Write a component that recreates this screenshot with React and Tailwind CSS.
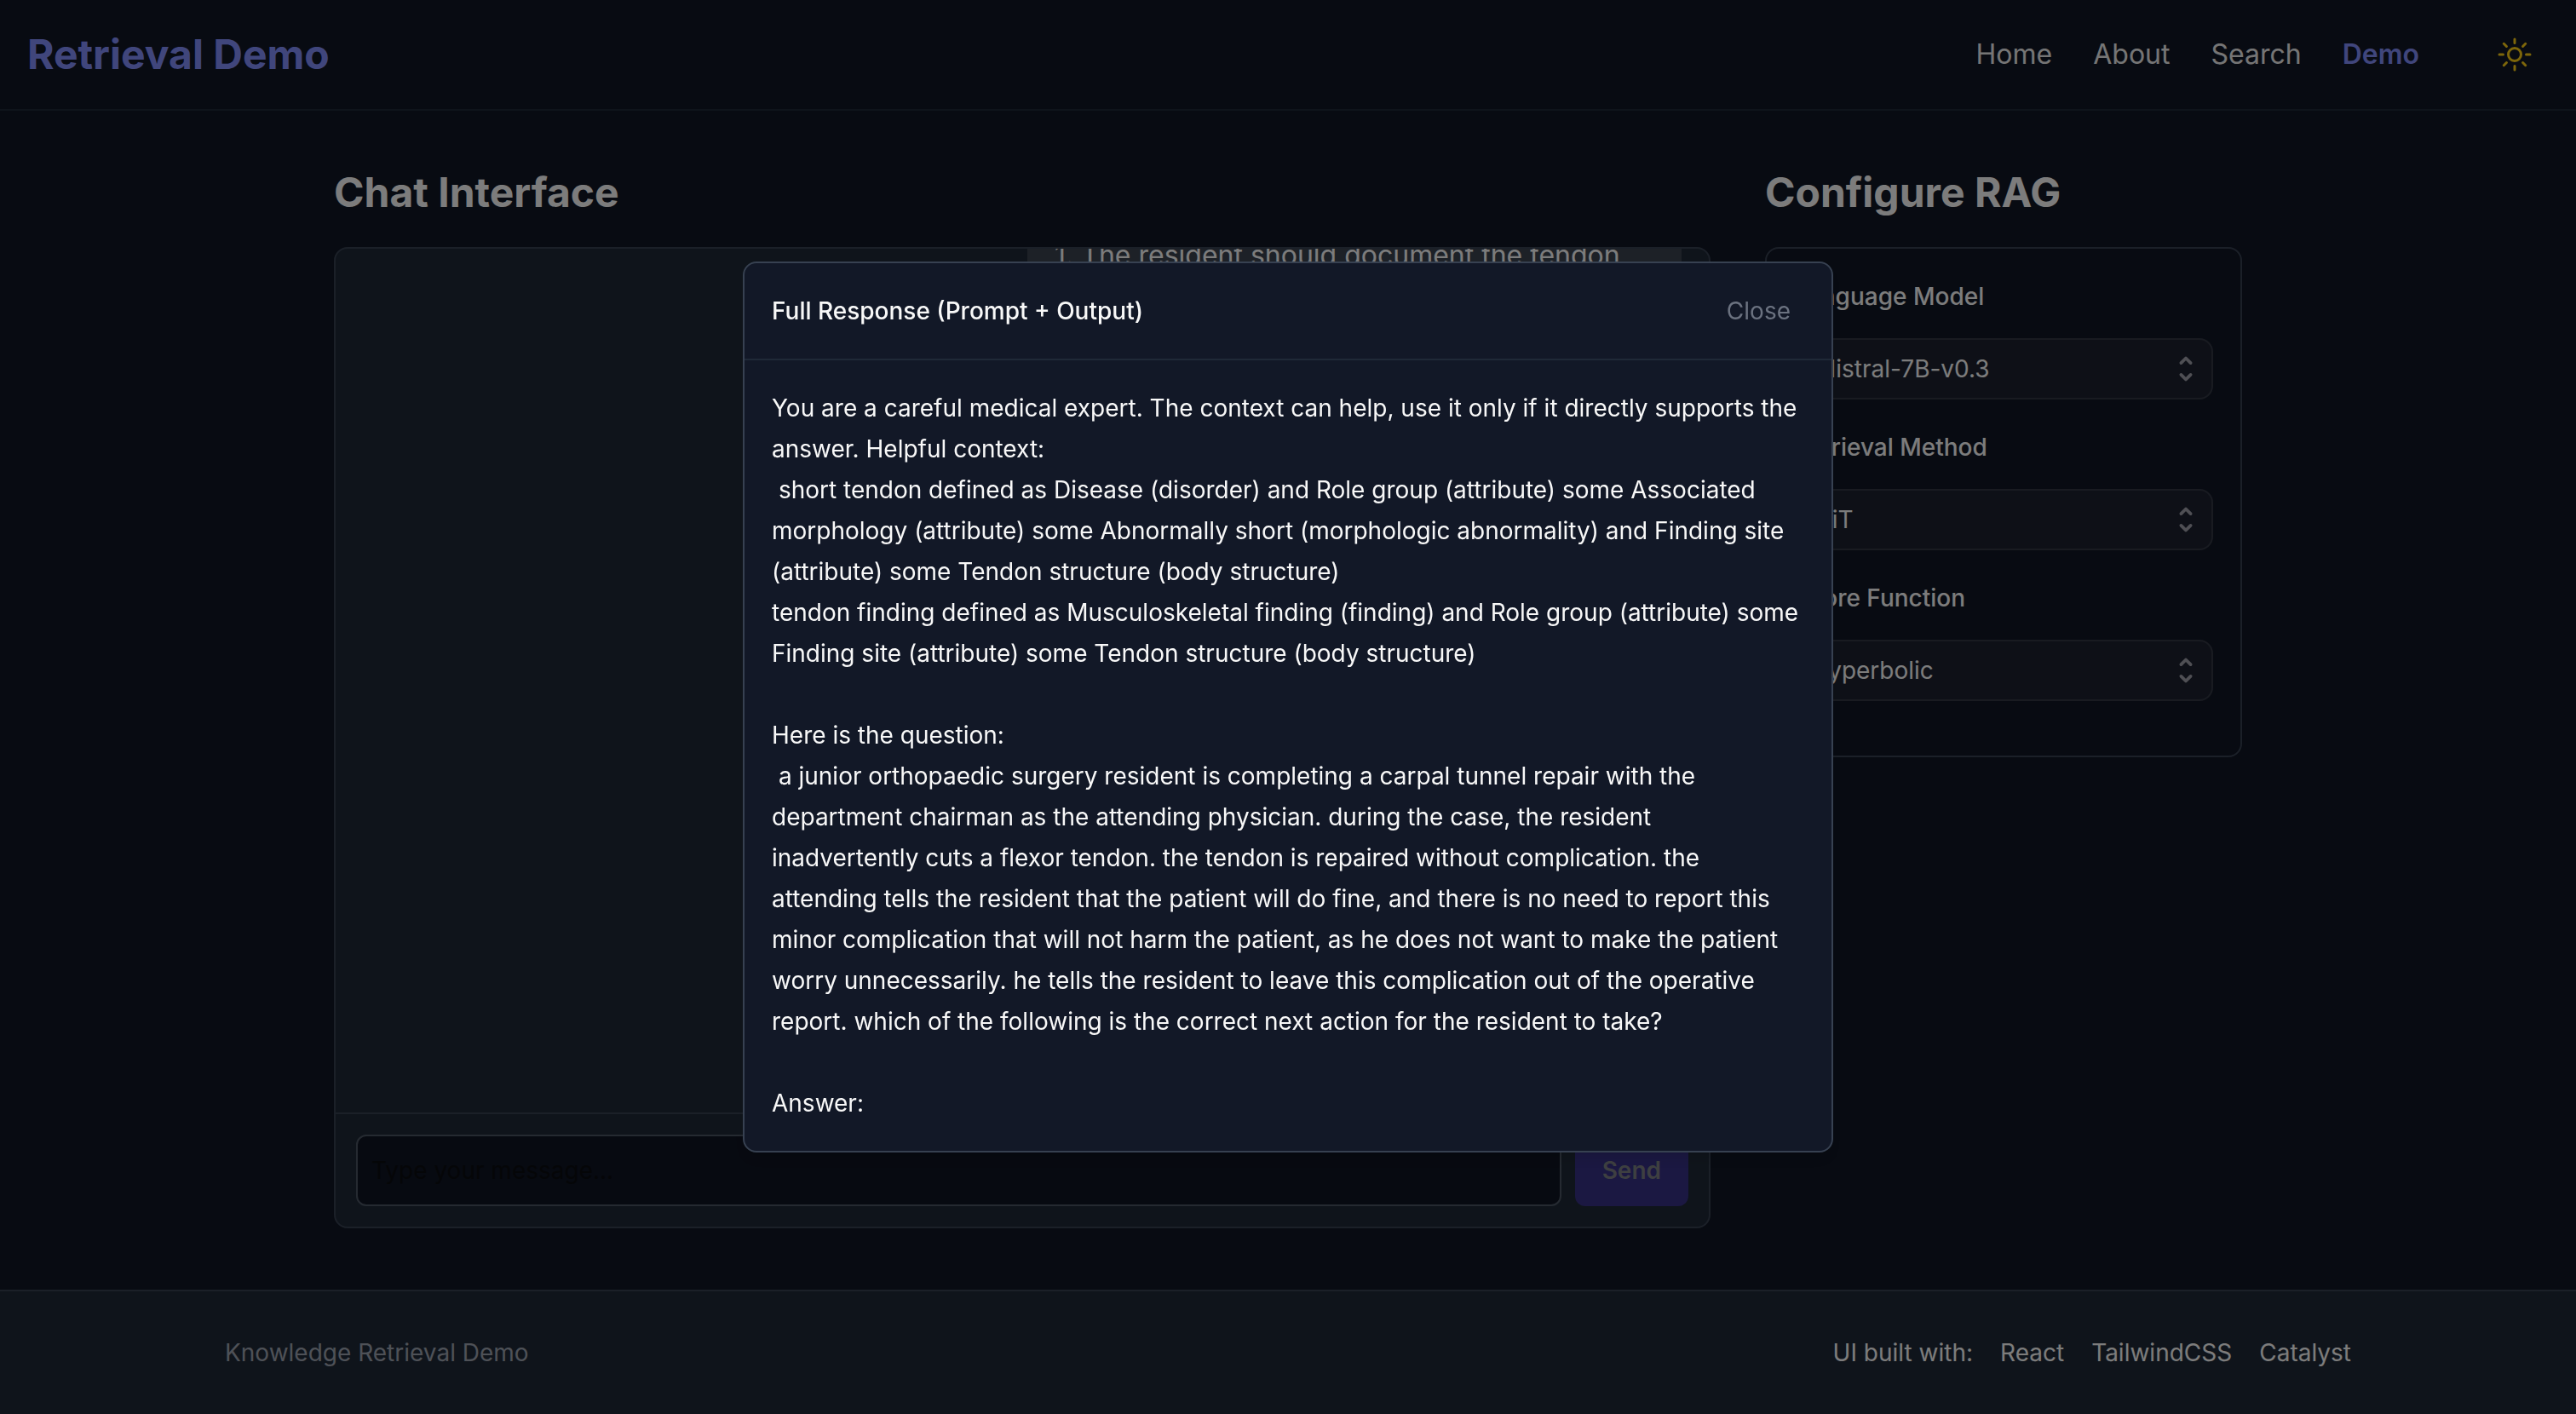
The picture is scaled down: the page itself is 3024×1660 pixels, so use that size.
import { HiOutlineSun } from "react-icons/hi2";

const NAV = ["Home", "About", "Search"];
const CREDITS = ["React", "TailwindCSS", "Catalyst"];
const SETTINGS = [
  { id: "model", label: "Language Model", value: "Mistral-7B-v0.3" },
  { id: "retrieval", label: "Retrieval Method", value: "HiT" },
  { id: "score", label: "Score Function", value: "hyperbolic" },
];

const RESPONSE = `You are a careful medical expert. The context can help, use it only if it directly supports the answer. Helpful context:
 short tendon defined as Disease (disorder) and Role group (attribute) some Associated morphology (attribute) some Abnormally short (morphologic abnormality) and Finding site (attribute) some Tendon structure (body structure)
tendon finding defined as Musculoskeletal finding (finding) and Role group (attribute) some Finding site (attribute) some Tendon structure (body structure)

Here is the question:
 a junior orthopaedic surgery resident is completing a carpal tunnel repair with the department chairman as the attending physician. during the case, the resident inadvertently cuts a flexor tendon. the tendon is repaired without complication. the attending tells the resident that the patient will do fine, and there is no need to report this minor complication that will not harm the patient, as he does not want to make the patient worry unnecessarily. he tells the resident to leave this complication out of the operative report. which of the following is the correct next action for the resident to take?

Answer:`;

function Header() {
  return (
    <header className="flex items-center justify-between border-b-2 border-[#1f2937] px-8 py-6">
      <a href="#top" className="text-5xl leading-[80px] font-bold text-[#818cf8]">
        Retrieval Demo
      </a>
      <div className="flex items-center gap-[72px]">
        <nav className="flex items-center gap-12 text-[32px] leading-[48px] text-[#ebebeb]">
          {NAV.map((item) => (
            <a key={item} href={"#" + item.toLowerCase()}>
              {item}
            </a>
          ))}
          <a href="#demo" aria-current="page" className="font-semibold text-[#818cf8]">
            Demo
          </a>
        </nav>
        <button type="button" aria-label="Toggle theme" className="p-4 text-[#facc15]">
          <HiOutlineSun className="size-12" />
        </button>
      </div>
    </header>
  );
}

function Chat() {
  return (
    <section className="min-w-0 flex-1">
      <h2 className="mb-8 text-5xl leading-[64px] font-bold">Chat Interface</h2>
      <div className="flex h-[1152px] flex-col rounded-2xl border-2 border-[#374151] bg-[#1f2937]">
        <div className="flex-1 overflow-hidden px-8">
          <div className="-mt-16 ml-auto max-w-3xl bg-[#3a424e] px-8 py-12 text-[32px] leading-[48px]">
            <p>1. The resident should document the tendon</p>
          </div>
        </div>
        <form className="flex gap-4 border-t-2 border-[#374151] p-6">
          <input
            type="text"
            aria-label="Message"
            placeholder="Type your message..."
            className="h-[84px] min-w-0 flex-1 rounded-xl border-2 border-[#4b5563] bg-[#0f1422] px-4 text-[28px] placeholder:text-[#0a0c10]"
          />
          <button
            type="button"
            disabled
            className="rounded-xl bg-[#363084] px-8 text-[28px] font-semibold text-[#7c7f82]"
          >
            Send
          </button>
        </form>
      </div>
    </section>
  );
}

function Setting({ id, label, value }) {
  return (
    <div className="mb-8">
      <label htmlFor={id} className="mb-[25px] block text-[28px] leading-[48px] font-medium">
        {label}
      </label>
      <div className="relative">
        <select
          id={id}
          defaultValue={value}
          className="block h-[72px] w-full appearance-none rounded-2xl border-2 border-white/10 bg-white/5 px-[22px] text-[28px] leading-[48px]"
        >
          <option>{value}</option>
        </select>
        <svg
          viewBox="0 0 16 16"
          fill="none"
          strokeWidth="1.5"
          strokeLinecap="round"
          strokeLinejoin="round"
          aria-hidden="true"
          className="pointer-events-none absolute inset-y-4 right-3 size-10 stroke-zinc-400"
        >
          <path d="M5.75 10.75L8 13L10.25 10.75" />
          <path d="M10.25 5.25L8 3L5.75 5.25" />
        </svg>
      </div>
    </div>
  );
}

function Config() {
  return (
    <section className="w-[560px] shrink-0">
      <h2 className="mb-8 text-5xl leading-[64px] font-bold">Configure RAG</h2>
      <div className="rounded-2xl border-2 border-[#374151] p-8">
        {SETTINGS.map((s) => (
          <Setting key={s.id} {...s} />
        ))}
      </div>
    </section>
  );
}

function Footer() {
  return (
    <footer className="border-t-2 border-[#374151] bg-[#1f2937] py-12 text-[28px] leading-[48px]">
      <div className="mx-auto flex max-w-[2560px] items-center justify-between px-8">
        <p className="text-[#9ca3af]">Knowledge Retrieval Demo</p>
        <div className="flex gap-8">
          <span>UI built with:</span>
          {CREDITS.map((c) => (
            <a key={c} href={"#" + c.toLowerCase()}>
              {c}
            </a>
          ))}
        </div>
      </div>
    </footer>
  );
}

function ResponseDialog() {
  return (
    <div className="fixed inset-0 flex items-center justify-center bg-black/50 p-8">
      <div
        role="dialog"
        aria-modal="true"
        aria-labelledby="dialog-title"
        className="w-full max-w-7xl rounded-2xl border-2 border-[#374151] bg-[#121827] text-[28px] leading-[48px] shadow-lg"
      >
        <div className="flex items-center justify-between border-b-2 border-[#1f2937] p-8">
          <h3 id="dialog-title" className="font-medium">
            Full Response (Prompt + Output)
          </h3>
          <button type="button" className="px-4 text-[#6b7280]">
            Close
          </button>
        </div>
        <div className="p-8 whitespace-pre-wrap">{RESPONSE}</div>
      </div>
    </div>
  );
}

export default function App() {
  return (
    <div className="flex min-h-screen flex-col bg-[#101624] font-['Inter',sans-serif] text-[#f8f8f8] antialiased">
      <Header />
      <main className="mx-auto flex w-full max-w-[2240px] flex-1 items-start gap-16 pt-16 pb-[72px]">
        <Chat />
        <Config />
      </main>
      <Footer />
      <ResponseDialog />
    </div>
  );
}
